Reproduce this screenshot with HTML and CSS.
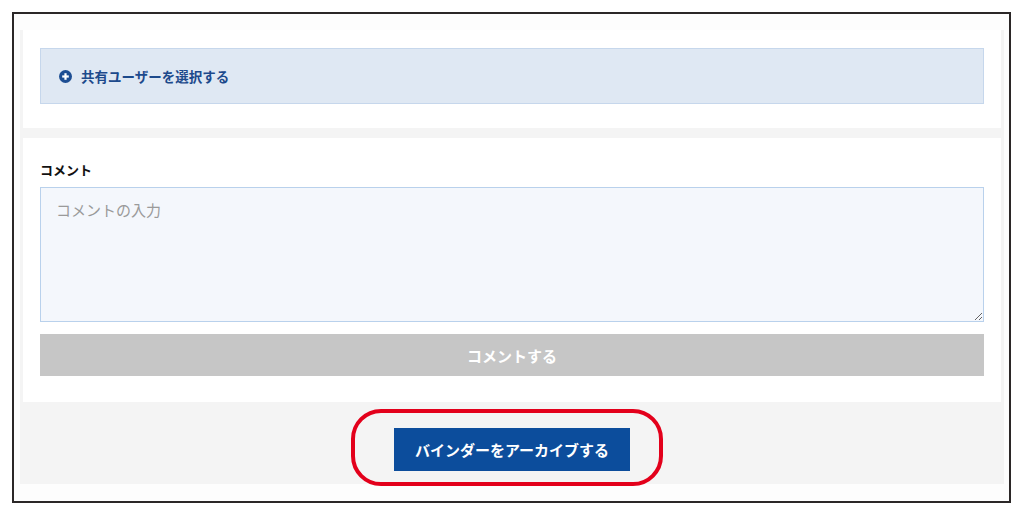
FILE: index.html
```html
<!DOCTYPE html>
<html lang="ja">
<head>
    <meta charset="UTF-8">
    <meta name="viewport" content="width=device-width, initial-scale=1.0">
    <title>バインダー</title>
    <link rel="stylesheet" href="styles.css">
</head>
<body>
    <div class="frame">
        <div class="page">
            <div class="card share-card">
                <div class="share-box">
                    <svg class="plus-icon" width="13" height="13" viewBox="0 0 13 13">
                        <circle cx="6.5" cy="6.5" r="6.5" fill="#1d4e93"/>
                        <rect x="3.2" y="5.4" width="6.6" height="2.2" fill="#fff"/>
                        <rect x="5.4" y="3.2" width="2.2" height="6.6" fill="#fff"/>
                    </svg>
                    <span>共有ユーザーを選択する</span>
                </div>
            </div>

            <div class="card comment-card">
                <label class="comment-label" for="commentInput">コメント</label>
                <textarea id="commentInput" placeholder="コメントの入力"></textarea>
                <button class="comment-btn" disabled>コメントする</button>
            </div>

            <div class="archive-area">
                <div class="archive-wrap">
                    <button class="archive-btn">バインダーをアーカイブする</button>
                    <span class="highlight-ring"></span>
                </div>
            </div>
        </div>
    </div>
</body>
</html>
```

FILE: styles.css
```css
* {
    box-sizing: border-box;
}
body {
    margin: 0;
    background-color: #fff;
    font-family: "Noto Sans CJK JP", "Noto Sans", sans-serif;
}
.frame {
    margin: 12px 0 0 12px;
    width: 999px;
    height: 491px;
    border: 2px solid #2b2727;
    background-color: #fdfdfd;
    padding: 16px 5px 0 6px;
}
.page {
    background-color: #f4f4f4;
    padding: 0 3px;
    height: 454px;
}
.card {
    background-color: #fff;
}
.share-card {
    padding: 18px 17px 24px;
    margin-bottom: 10px;
}
.share-box {
    height: 56px;
    background-color: #dfe8f3;
    border: 1px solid #c6d7ec;
    display: flex;
    align-items: center;
    padding-left: 18px;
    gap: 9px;
    color: #1d4a8c;
    font-size: 13.5px;
    font-weight: bold;
}
.plus-icon {
    flex-shrink: 0;
}
.comment-card {
    padding: 22px 17px 26px;
}
.comment-label {
    display: block;
    font-size: 13px;
    font-weight: bold;
    color: #111;
    line-height: 19px;
    margin-bottom: 8px;
}
textarea {
    display: block;
    width: 100%;
    height: 135px;
    background-color: #f4f7fc;
    border: 1px solid #b9d1ec;
    border-radius: 0;
    padding: 11px 15px;
    font-family: inherit;
    font-size: 15px;
    color: #333;
    margin: 0 0 12px;
}
textarea::placeholder {
    color: #9a9a9a;
}
.comment-btn {
    display: block;
    width: 100%;
    height: 42px;
    border: none;
    background-color: #c6c6c6;
    color: #fff;
    font-family: inherit;
    font-size: 15px;
    font-weight: bold;
}
.archive-area {
    display: flex;
    justify-content: center;
    padding: 26px 0 12px;
}
.archive-wrap {
    position: relative;
}
.archive-btn {
    display: block;
    width: 236px;
    height: 43px;
    border: none;
    background-color: #0c4d9c;
    color: #fff;
    font-family: inherit;
    font-size: 15px;
    font-weight: bold;
    cursor: pointer;
}
.highlight-ring {
    position: absolute;
    left: -43px;
    right: -33px;
    top: -19px;
    bottom: -15px;
    border: 4px solid #e3001b;
    border-radius: 30px;
    pointer-events: none;
}
```
